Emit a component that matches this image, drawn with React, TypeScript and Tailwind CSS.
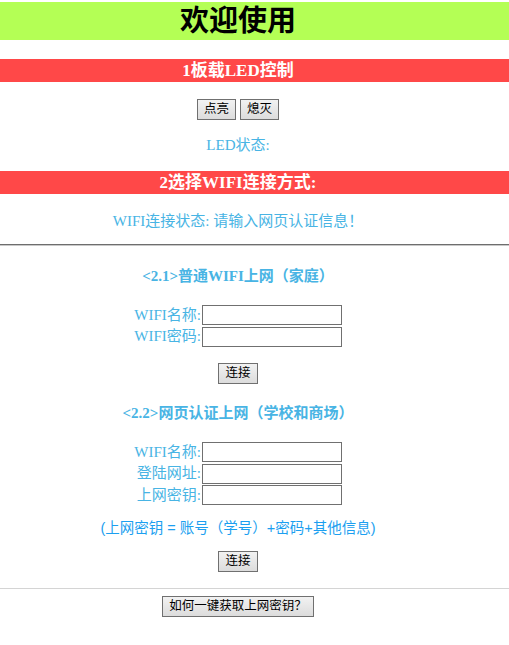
import type { ReactNode } from "react";

const serif = "font-['Liberation_Serif','Noto_Sans_CJK_SC',serif]";
const sans = "font-['Liberation_Sans','Noto_Sans_CJK_SC',sans-serif]";

// the old page centres everything on x≈238, not on the window middle
function Center({ children, className = "" }: { children: ReactNode; className?: string }) {
  return <div className={`flex justify-center pr-[33px] ${className}`}>{children}</div>;
}

function Bar({ children }: { children: ReactNode }) {
  return (
    <div className={`flex h-[23px] items-center justify-center bg-[#ff4848] pr-[33px] text-[17px] font-bold leading-none text-white ${serif}`}>
      {children}
    </div>
  );
}

function Btn({ children }: { children: ReactNode }) {
  return (
    <button
      type="button"
      className={`h-[21px] border border-[#707070] bg-[linear-gradient(180deg,#f2f2f2,#dcdcdc)] px-[6px] text-[12.5px] leading-none text-black ${sans}`}
    >
      {children}
    </button>
  );
}

function Field({ label }: { label: string }) {
  return (
    <div className="flex h-[20.5px] items-center">
      <span className={`w-[67px] text-right text-[15px] leading-none text-[#48b4e4] ${serif}`}>{label}</span>
      <input className="ml-[1px] h-[20px] w-[140px] border border-[#707070] bg-white outline-none" />
    </div>
  );
}

export default function App() {
  return (
    <div className={`min-h-[645px] bg-white pt-[2px] ${serif}`}>
      <div className={`flex h-[38px] items-center justify-center bg-[#b4ff55] pr-[33px] text-[29px] font-bold leading-none text-black ${sans}`}>
        欢迎使用
      </div>

      <div className="mt-[19px]">
        <Bar>1板载LED控制</Bar>
      </div>

      <Center className="mt-[17px] gap-[4px]">
        <Btn>点亮</Btn>
        <Btn>熄灭</Btn>
      </Center>

      <Center className="mt-[16px]">
        <p className={`text-[15px] leading-[18px] text-[#48b4e4] ${serif}`}>LED状态:</p>
      </Center>

      <div className="mt-[17px]">
        <Bar>2选择WIFI连接方式:</Bar>
      </div>

      <Center className="mt-[18px]">
        <p className={`text-[15px] leading-[18px] text-[#48b4e4] ${serif}`}>WIFI连接状态: 请输入网页认证信息！</p>
      </Center>

      <div className="mt-[14px] h-[2px] border-t border-[#6e6e6e] bg-[#c8c8c8]" />

      <Center className="mt-[21px]">
        <p className={`text-[15px] font-bold leading-[18px] text-[#48b4e4] ${serif}`}>&lt;2.1&gt;普通WIFI上网（家庭）</p>
      </Center>

      <Center className="mt-[20px]">
        <div className="flex flex-col gap-[1px]">
          <Field label="WIFI名称:" />
          <Field label="WIFI密码:" />
        </div>
      </Center>

      <Center className="mt-[16px]">
        <Btn>连接</Btn>
      </Center>

      <Center className="mt-[20px]">
        <p className={`text-[15px] font-bold leading-[18px] text-[#48b4e4] ${serif}`}>&lt;2.2&gt;网页认证上网（学校和商场）</p>
      </Center>

      <Center className="mt-[20px]">
        <div className="flex flex-col gap-[1px]">
          <Field label="WIFI名称:" />
          <Field label="登陆网址:" />
          <Field label="上网密钥:" />
        </div>
      </Center>

      <Center className="mt-[13px]">
        <p className={`text-[14.5px] leading-[18px] text-[#1c9ff0] ${sans}`}>(上网密钥 = 账号（学号）+密码+其他信息)</p>
      </Center>

      <Center className="mt-[14px]">
        <Btn>连接</Btn>
      </Center>

      <div className="mt-[16px] h-px bg-[#d4d4d4]" />

      <Center className="mt-[7px]">
        <Btn>如何一键获取上网密钥？</Btn>
      </Center>
    </div>
  );
}
